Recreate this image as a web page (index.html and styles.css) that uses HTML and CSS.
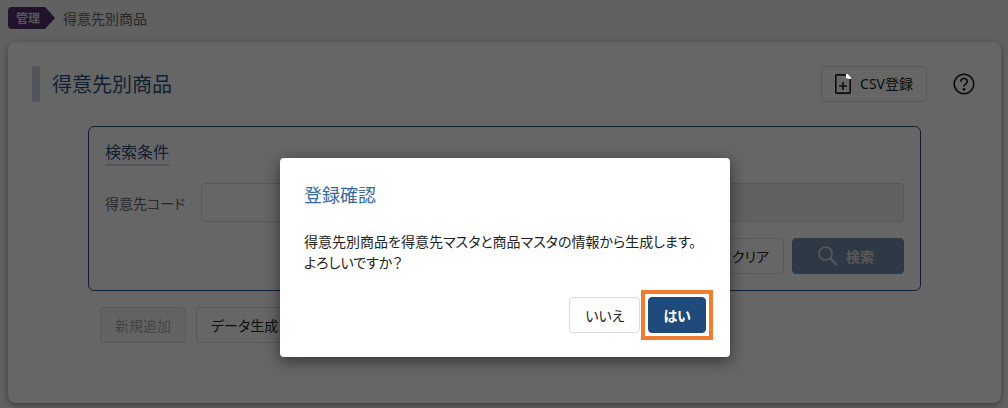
FILE: index.html
```html
<!DOCTYPE html>
<html lang="ja">
<head>
<meta charset="utf-8">
<meta name="viewport" content="width=device-width, initial-scale=1">
<title>得意先別商品</title>
<link rel="stylesheet" href="styles.css">
</head>
<body>
<div class="page">
  <nav class="breadcrumb" aria-label="現在位置">
    <span class="tag">管理</span>
    <span>得意先別商品</span>
  </nav>
  <main class="card">
    <header class="card-header">
      <h1 class="title">得意先別商品</h1>
      <button class="btn btn-csv" type="button">
        <svg class="icon-file" viewBox="0 0 18 22" aria-hidden="true">
          <path d="M12.5 1.9H2.6a.8.8 0 0 0-.8.8v16.6a.8.8 0 0 0 .8.8h12.8a.8.8 0 0 0 .8-.8V6" fill="none" stroke="currentColor" stroke-width="1.6"/>
          <path d="M9 9v8M5 13h8" stroke="currentColor" stroke-width="1.6"/>
        </svg>
        CSV登録
      </button>
      <button class="help" type="button" aria-label="ヘルプ">
        <svg class="icon-help" viewBox="0 0 24 24" aria-hidden="true">
          <circle cx="12" cy="12" r="9.8" fill="none" stroke="currentColor" stroke-width="1.6"/>
          <path d="M8.8 9.7C8.8 7.6 10.1 6.5 12 6.5s3.3 1.2 3.3 3c0 2.3-3.2 2.6-3.2 5" fill="none" stroke="currentColor" stroke-width="1.6"/>
          <circle cx="12" cy="17.3" r="1.4" fill="currentColor"/>
        </svg>
      </button>
    </header>
    <form class="search">
      <h2 class="search-title">検索条件</h2>
      <div class="field">
        <label for="code">得意先コード</label>
        <div class="inputs">
          <input class="input" id="code" type="text">
          <input class="input input-name" type="text" aria-label="得意先名" disabled>
        </div>
      </div>
      <div class="search-actions">
        <button class="btn" type="reset">クリア</button>
        <button class="btn btn-search" type="submit" disabled>
          <svg class="icon-search" viewBox="0 0 20 20" aria-hidden="true">
            <circle cx="7.5" cy="7.5" r="6.5" fill="none" stroke="currentColor" stroke-width="1.6"/>
            <path d="M12 12l7 7" stroke="currentColor" stroke-width="2.2"/>
          </svg>
          検索
        </button>
      </div>
    </form>
    <div class="actions">
      <button class="btn btn-add" type="button" disabled>新規追加</button>
      <button class="btn" type="button">データ生成</button>
    </div>
  </main>
</div>
<div class="overlay">
  <svg class="page-fold" viewBox="0 0 5 5" aria-hidden="true"><path d="M0 0h1.5L5 3.5V5H4L0 4z" fill="#fff"/></svg>
  <section class="modal" role="dialog" aria-modal="true" aria-labelledby="modal-title">
    <h2 class="modal-title" id="modal-title">登録確認</h2>
    <p class="modal-text">得意先別商品を得意先マスタと商品マスタの情報から生成します。<br>よろしいですか？</p>
    <div class="modal-actions">
      <button class="btn btn-no" type="button">いいえ</button>
      <button class="btn btn-yes" type="button">はい</button>
    </div>
  </section>
</div>
</body>
</html>
```
FILE: styles.css
```css
* {
  box-sizing: border-box;
}

body {
  margin: 0;
  min-height: 100vh;
  background: #f2f2f2;
  color: #222;
  font: 14px/20px "Noto Sans CJK JP", sans-serif;
  font-feature-settings: "palt";
}

h1,
h2,
p {
  margin: 0;
  font-weight: 400;
}

button,
input {
  font: inherit;
  font-feature-settings: inherit;
  color: inherit;
}

.page {
  display: flex;
  flex-direction: column;
  gap: 13px;
  min-height: 100vh;
  padding: 7px 7px 5px 8px;
}

.breadcrumb {
  display: flex;
  align-items: center;
  gap: 8px;
  height: 22px;
  color: #666;
}

.tag {
  padding: 1px 15px 1px 8px;
  border-radius: 4px 0 0 4px;
  background: #56306f;
  color: #ddd;
  font-size: 12px;
  font-weight: 700;
  clip-path: polygon(0 0, calc(100% - 10px) 0, 100% 50%, calc(100% - 10px) 100%, 0 100%);
}

.card {
  flex: 1;
  padding: 24px;
  border-radius: 8px;
  background: #fff;
  box-shadow: 0 2px 6px rgba(0, 0, 0, 0.4);
}

.card-header {
  display: flex;
  align-items: center;
}

.title {
  flex: 1;
  padding-left: 12px;
  border-left: 8px solid #ccd8e2;
  color: #2a5080;
  font-size: 20px;
  line-height: 36px;
}

.btn {
  display: inline-flex;
  align-items: center;
  justify-content: center;
  height: 36px;
  padding: 0 14px;
  border: 1px solid #dcdcdc;
  border-radius: 4px;
  background: #fff;
  white-space: nowrap;
}

.btn-csv {
  gap: 8px;
  padding: 0 13px 0 12px;
  font-family: "Noto Sans", "Noto Sans CJK JP", sans-serif;
}

.icon-file {
  width: 18px;
  height: 22px;
}

.help {
  display: flex;
  margin: 0 1px 0 25px;
  padding: 0;
  border: 0;
  background: none;
}

.icon-help {
  width: 24px;
  height: 24px;
}

.search {
  margin: 24px 56px 0;
  padding: 11px 16px 16px;
  border: 1px solid #2a5080;
  border-radius: 6px;
}

.search-title {
  width: fit-content;
  border-bottom: 2px solid #ccd8e2;
  color: #2a5080;
  font-size: 16px;
  line-height: 26px;
}

.field {
  display: flex;
  align-items: center;
  gap: 16px;
  margin-top: 17px;
  color: #666;
}

.inputs {
  display: flex;
  flex: 1;
}

.input {
  flex: 1;
  min-width: 0;
  height: 39px;
  padding: 0 8px;
  border: 1px solid #dcdcdc;
  border-radius: 4px 0 0 4px;
  background: #fff;
}

.input-name {
  flex: 2;
  border-left: 0;
  border-radius: 0 4px 4px 0;
  background: #f2f2f2;
}

.search-actions {
  display: flex;
  justify-content: flex-end;
  gap: 8px;
  margin-top: 16px;
}

.btn-search {
  gap: 8px;
  width: 112px;
  padding: 0 18px 0 14px;
  border-color: #778fac;
  background: #778fac;
  color: #ddd;
  font-weight: 700;
}

.icon-search {
  width: 20px;
  height: 20px;
}

.actions {
  display: flex;
  gap: 10px;
  margin: 16px 68px 0;
}

.btn-add {
  background: #f7f7f7;
  color: #aaa;
}

.overlay {
  position: absolute;
  inset: 0;
  padding: 158px 0 0 2px;
  background: rgba(0, 0, 0, 0.6);
}

.page-fold {
  position: absolute;
  top: 74px;
  right: 157px;
  width: 5px;
  height: 5px;
}

.modal {
  width: 450px;
  max-width: 100%;
  margin: 0 auto;
  padding: 24px;
  border-radius: 4px;
  background: #fff;
  box-shadow: 0 4px 16px rgba(0, 0, 0, 0.5);
}

.modal-title {
  color: #3a689c;
  font-size: 18px;
  line-height: 24px;
}

.modal-text {
  margin: 25px 0 24px;
  line-height: 21px;
}

.modal-actions {
  display: flex;
  justify-content: flex-end;
  gap: 8px;
}

.btn-no {
  padding: 0 15px;
}

.btn-yes {
  position: relative;
  border-color: #1f4a7c;
  background: #1f4a7c;
  color: #fff;
  font-weight: 700;
}

.btn-yes::after {
  content: "";
  position: absolute;
  inset: -8px;
  border: 4px solid #ed7d31;
}
```
